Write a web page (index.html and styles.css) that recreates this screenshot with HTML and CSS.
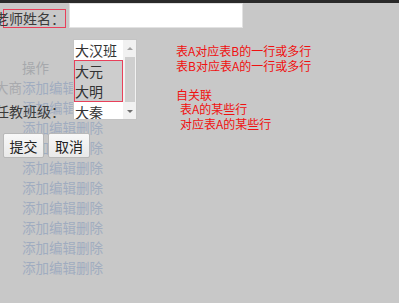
FILE: index.html
```html
<!DOCTYPE html>
<html lang="zh-CN">
<head>
<meta charset="utf-8">
<title>老师</title>
<link rel="stylesheet" href="styles.css">
</head>
<body>
<div class="topbar"></div>
<div class="page">
  <table class="bg-table">
    <thead>
      <tr><th class="c-name"></th><th class="c-op">操作</th></tr>
    </thead>
    <tbody>
      <tr><td class="c-name">大商</td><td class="c-op"><a>添加</a><a>编辑</a><a>删除</a></td></tr>
      <tr><td class="c-name"></td><td class="c-op"><a>添加</a><a>编辑</a><a>删除</a></td></tr>
      <tr><td class="c-name"></td><td class="c-op"><a>添加</a><a>编辑</a><a>删除</a></td></tr>
      <tr><td class="c-name"></td><td class="c-op"><a>添加</a><a>编辑</a><a>删除</a></td></tr>
      <tr><td class="c-name"></td><td class="c-op"><a>添加</a><a>编辑</a><a>删除</a></td></tr>
      <tr><td class="c-name"></td><td class="c-op"><a>添加</a><a>编辑</a><a>删除</a></td></tr>
      <tr><td class="c-name"></td><td class="c-op"><a>添加</a><a>编辑</a><a>删除</a></td></tr>
      <tr><td class="c-name"></td><td class="c-op"><a>添加</a><a>编辑</a><a>删除</a></td></tr>
      <tr><td class="c-name"></td><td class="c-op"><a>添加</a><a>编辑</a><a>删除</a></td></tr>
      <tr><td class="c-name"></td><td class="c-op"><a>添加</a><a>编辑</a><a>删除</a></td></tr>
    </tbody>
  </table>

  <form class="form">
    <div class="row row-name">
      <label class="lbl lbl-boxed"><span>老师姓名：</span></label>
      <input class="text-input" type="text">
    </div>
    <div class="lower">
      <div class="left-col">
        <div class="row row-class">
          <label class="lbl"><span>任教班级：</span></label>
          <div class="listbox">
            <div class="options">
              <div class="opt">大汉班</div>
              <div class="sel-group">
                <div class="opt sel">大元</div>
                <div class="opt sel">大明</div>
              </div>
              <div class="opt">大秦</div>
            </div>
            <div class="scrollbar">
              <div class="arrow"><span class="tri-up"></span></div>
              <div class="track"><div class="thumb"></div></div>
              <div class="arrow"><span class="tri-down"></span></div>
            </div>
          </div>
        </div>
        <div class="buttons">
          <button type="button" class="btn btn-submit">提交</button>
          <button type="button" class="btn btn-cancel">取消</button>
        </div>
      </div>
      <div class="notes">
        <div class="note-group">
          <div class="note-line">表A对应表B的一行或多行</div>
          <div class="note-line">表B对应表A的一行或多行</div>
        </div>
        <div class="note-group note-gap">
          <div class="note-line">自关联</div>
          <div class="note-line indent">表A的某些行</div>
          <div class="note-line indent">对应表A的某些行</div>
        </div>
      </div>
    </div>
  </form>
</div>
</body>
</html>
```

FILE: styles.css
```css
html, body {
  margin: 0;
  padding: 0;
}

body {
  background: #c8c8c8;
  font-family: "Microsoft YaHei", "Noto Sans CJK SC", "Noto Sans", sans-serif;
  color: #333;
  height: 303px;
  overflow: hidden;
}

.topbar {
  height: 3px;
  background: #2a2a2a;
}

.page {
  position: relative;
}

/* faded table lying behind the form */
.bg-table {
  position: absolute;
  left: -5px;
  top: 54px;
  border-collapse: collapse;
  font-size: 13.5px;
  line-height: 20px;
  z-index: 0;
}

.bg-table th,
.bg-table td {
  padding: 0;
  text-align: left;
  white-space: nowrap;
}

.bg-table th {
  font-weight: normal;
  color: #a6a8ac;
}

.bg-table td.c-name {
  color: #a9aaae;
}

.bg-table a {
  color: #a0acc0;
  text-decoration: none;
}

.form {
  position: relative;
  z-index: 1;
}

.row {
  display: flex;
  align-items: flex-end;
}

.lbl {
  display: flex;
  justify-content: flex-end;
  width: 61px;
  margin-left: 3px;
  border: 1px solid transparent;
  font-size: 14px;
  line-height: 16px;
  padding-bottom: 1px;
  white-space: nowrap;
  color: #3a3a3a;
}

.lbl-boxed {
  border-color: #e8405a;
}

.text-input {
  margin: 0 0 0 3px;
  width: 174px;
  height: 25px;
  box-sizing: border-box;
  border: 1px solid #e2e2e2;
  background: #fff;
  padding: 0;
  outline: none;
}

.lower {
  display: flex;
  align-items: flex-start;
}

.row-class {
  margin-top: 11px;
}

.row-class .lbl {
  line-height: 15px;
  padding-bottom: 0;
}

.listbox {
  display: flex;
  margin-left: 7px;
  width: 64px;
  height: 81px;
  box-sizing: border-box;
  border: 1px solid #c4c4c4;
  background: #fff;
  overflow: hidden;
}

.options {
  width: 49px;
  overflow: hidden;
}

.opt {
  height: 20px;
  line-height: 20px;
  padding-left: 1px;
  font-size: 14px;
  color: #333;
  white-space: nowrap;
}

.sel-group {
  border: 1px solid #e8405a;
}

.opt.sel {
  background: #cdcdcd;
  padding-left: 0;
}

.scrollbar {
  width: 13px;
  display: flex;
  flex-direction: column;
  background: #f1f1f1;
}

.arrow {
  height: 16px;
  display: flex;
  align-items: center;
  justify-content: center;
}

.tri-up,
.tri-down {
  width: 0;
  height: 0;
  border-left: 3px solid transparent;
  border-right: 3px solid transparent;
}

.tri-up {
  border-bottom: 3px solid #a3a3a3;
}

.tri-down {
  border-top: 3px solid #6e6e6e;
}

.track {
  flex: 1;
  padding: 1px 1px 0 2px;
}

.thumb {
  height: 45px;
  background: #cfcfcf;
}

.buttons {
  display: flex;
  gap: 4px;
  margin-top: 13px;
  margin-left: 3px;
}

.btn {
  height: 25px;
  padding: 0;
  font-family: inherit;
  font-size: 14px;
  color: #222;
  border: 1px solid #b8b8b8;
  border-radius: 2px;
  background: linear-gradient(#f8f8f8, #e9e9e9);
  line-height: 22px;
}

.btn-submit {
  width: 41px;
}

.btn-cancel {
  width: 42px;
}

.notes {
  margin-left: 39px;
  margin-top: 16px;
  font-size: 12px;
  line-height: 14.6px;
  color: #f01010;
  white-space: nowrap;
}

.note-gap {
  margin-top: 14.6px;
}

.indent {
  padding-left: 4px;
}
```
